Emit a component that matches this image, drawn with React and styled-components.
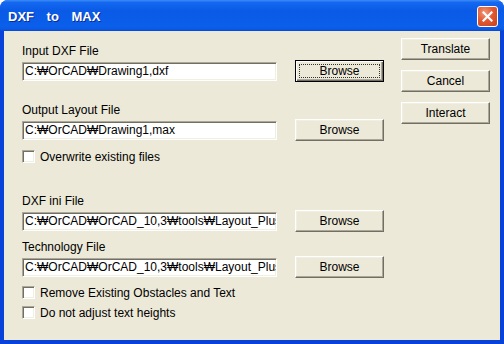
import styled, { createGlobalStyle } from "styled-components";

const GlobalStyle = createGlobalStyle`
  html, body {
    margin: 0;
    padding: 0;
    background: #ffffff;
  }
  body {
    font-family: "Liberation Sans", Arial, sans-serif;
    font-size: 12px;
    color: #000;
  }
`;

const Window = styled.div`
  width: 504px;
  height: 344px;
  display: flex;
  flex-direction: column;
  background: #0842d8;
  border-radius: 8px 8px 0 0;
  overflow: hidden;
`;

const TitleBar = styled.div`
  height: 31px;
  flex: none;
  display: flex;
  align-items: center;
  justify-content: space-between;
  padding: 1px 6px 0 8px;
  box-sizing: border-box;
  background: linear-gradient(
    180deg,
    #3d8cf6 0%,
    #1468f0 8%,
    #0a5ae6 35%,
    #0b5fea 85%,
    #0a5ae4 94%,
    #0845d6 100%
  );
`;

const Title = styled.span`
  font-family: "Liberation Sans", Arial, sans-serif;
  font-weight: bold;
  font-size: 13px;
  color: #fff;
  word-spacing: 9px;
  text-shadow: 1px 1px 0 #0a2a9c;
`;

const CloseButton = styled.div`
  width: 21px;
  height: 21px;
  box-sizing: border-box;
  border: 1px solid #fff;
  border-radius: 3px;
  background: radial-gradient(circle at 35% 30%, #f29a7c 0%, #e25a32 45%, #c8401c 100%);
  display: flex;
  align-items: center;
  justify-content: center;
`;

const Body = styled.div`
  flex: 1;
  margin: 0 4px 4px 4px;
  background: #ece9d8;
  display: flex;
  padding: 0 10px 0 18px;
`;

const Form = styled.div`
  width: 362px;
  display: flex;
  flex-direction: column;
  padding-top: 13px;
`;

const Field = styled.div`
  display: flex;
  flex-direction: column;
  gap: 2px;
  margin-top: ${(p) => p.$top || 0}px;
`;

const Label = styled.div`
  line-height: 14px;
  height: 14px;
  white-space: nowrap;
`;

const Row = styled.div`
  display: flex;
  align-items: center;
  justify-content: space-between;
  height: 22px;
`;

const TextBox = styled.input`
  width: 255px;
  height: 19px;
  box-sizing: border-box;
  margin: 0;
  padding: 0 0 0 2px;
  border: 1px solid;
  border-color: #aca899 #ffffff #ffffff #aca899;
  box-shadow: inset 1px 1px 0 #716f64, inset -1px -1px 0 #f1efe2;
  background: #fff;
  font-family: "Liberation Sans", "DejaVu Sans", Arial, sans-serif;
  font-size: 12px;
  color: #000;
  outline: none;
`;

const Button = styled.button`
  width: ${(p) => p.$width || 89}px;
  height: 22px;
  box-sizing: border-box;
  margin: 0;
  padding: 0;
  background: #ece9d8;
  font-family: "Liberation Sans", Arial, sans-serif;
  font-size: 12px;
  color: #000;
  border: 1px solid;
  border-color: ${(p) => (p.$default ? "#000" : "#fff #716f64 #716f64 #fff")};
  box-shadow: ${(p) =>
    p.$default
      ? "inset 1px 1px 0 #fff, inset -1px -1px 0 #716f64, inset -2px -2px 0 #aca899"
      : "inset -1px -1px 0 #aca899, inset 1px 1px 0 #f1efe2"};
  position: relative;
  display: flex;
  align-items: center;
  justify-content: center;
`;

const FocusRing = styled.span`
  position: absolute;
  inset: 3px;
  border: 1px dotted #333;
  pointer-events: none;
`;

const CheckRow = styled.label`
  display: flex;
  align-items: center;
  gap: 5px;
  height: 13px;
  margin-top: ${(p) => p.$top || 0}px;
  white-space: nowrap;
`;

const Box = styled.span`
  width: 13px;
  height: 13px;
  box-sizing: border-box;
  background: #fff;
  border: 1px solid;
  border-color: #aca899 #fff #fff #aca899;
  box-shadow: inset 1px 1px 0 #716f64, inset -1px -1px 0 #f1efe2;
  flex: none;
`;

const Actions = styled.div`
  margin-left: 17px;
  padding-top: 7px;
  display: flex;
  flex-direction: column;
  gap: 10px;
`;

function FileField({ label, value, top, focused }) {
  return (
    <Field $top={top}>
      <Label>{label}</Label>
      <Row>
        <TextBox readOnly value={value} />
        <Button $default={focused}>
          Browse
          {focused && <FocusRing />}
        </Button>
      </Row>
    </Field>
  );
}

function Check({ label, top }) {
  return (
    <CheckRow $top={top}>
      <Box />
      {label}
    </CheckRow>
  );
}

export default function App() {
  return (
    <>
      <GlobalStyle />
      <Window>
        <TitleBar>
          <Title>DXF to MAX</Title>
          <CloseButton>
            <svg width="11" height="11" viewBox="0 0 11 11">
              <path d="M1.5 1.5 L9.5 9.5 M9.5 1.5 L1.5 9.5" stroke="#fff" strokeWidth="2.2" strokeLinecap="square" />
            </svg>
          </CloseButton>
        </TitleBar>
        <Body>
          <Form>
            <FileField label="Input DXF File" value="C:₩OrCAD₩Drawing1,dxf" focused />
            <FileField label="Output Layout File" value="C:₩OrCAD₩Drawing1,max" top={21} />
            <Check label="Overwrite existing files" top={9} />
            <FileField label="DXF ini File" value="C:₩OrCAD₩OrCAD_10,3₩tools₩Layout_Plus" top={31} />
            <FileField label="Technology File" value="C:₩OrCAD₩OrCAD_10,3₩tools₩Layout_Plus" top={8} />
            <Check label="Remove Existing Obstacles and Text" top={8} />
            <Check label="Do not adjust text heights" top={7} />
          </Form>
          <Actions>
            <Button>Translate</Button>
            <Button>Cancel</Button>
            <Button>Interact</Button>
          </Actions>
        </Body>
      </Window>
    </>
  );
}
